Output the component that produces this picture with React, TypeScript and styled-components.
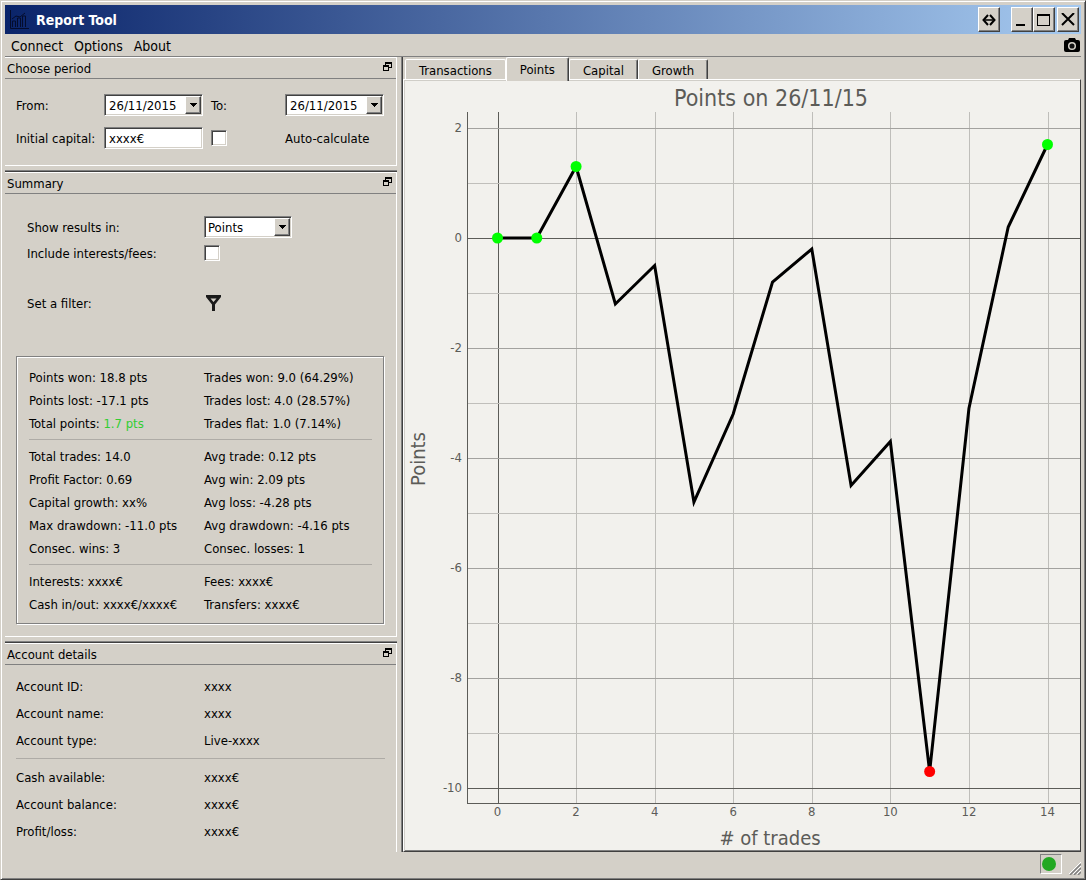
import React from "react";
import styled, { createGlobalStyle, css } from "styled-components";

const face = "#d4d0c8";
const shade = "#808080";
const dark = "#404040";
const chartBg = "#f2f1ed";
const chartInk = "#5c5c58";
const fontStack = '"DejaVu Sans Condensed", "DejaVu Sans", "Noto Sans", sans-serif';

const GlobalStyle = createGlobalStyle`
  *, *::before, *::after { box-sizing: border-box; }
  body { margin: 0; background: ${face}; }
  body, button, input, select { font-family: ${fontStack}; font-size: 13px; color: #000; }
`;

const raised = css`
  border: 1px solid;
  border-color: #fff ${dark} ${dark} #fff;
  box-shadow: inset -1px -1px ${shade};
`;

const sunken = css`
  border: 1px solid;
  border-color: ${shade} #fff #fff ${shade};
  box-shadow: inset 1px 1px ${dark}, inset -1px -1px ${face};
`;

const Window = styled.div`
  display: flex;
  flex-direction: column;
  min-height: 100vh;
  padding: 4px 3px 0 4px;
  background: ${face};
  border: 1px solid;
  border-color: ${face} ${dark} ${dark} ${face};
  box-shadow: inset 1px 1px #fff, inset -1px -1px ${shade};
`;

const TitleBar = styled.header`
  display: flex;
  align-items: center;
  height: 29px;
  margin-right: 1px;
  padding: 0 2px 0 4px;
  background: linear-gradient(to right, #0a246a, #a6caf0);
`;

const Title = styled.h1`
  flex: 1;
  margin: 0 0 0 7px;
  font-size: 14px;
  line-height: 20px;
  color: #fff;
`;

const WindowButton = styled.button<{ $gap?: number }>`
  display: grid;
  place-items: center;
  width: 22px;
  height: 25px;
  padding: 0;
  margin-left: ${(p) => p.$gap ?? 0}px;
  background: ${face};
  ${raised}
`;

const MenuBar = styled.nav`
  display: flex;
  align-items: center;
  gap: 11px;
  height: 23px;
  margin-right: 1px;
  padding: 0 1px 0 6px;
  border-bottom: 1px solid ${shade};
`;

const MenuItem = styled.button`
  padding: 2px 0 0;
  border: 0;
  background: none;
  font-size: 14px;
  line-height: 20px;
`;

const IconButton = styled.button<{ $end?: boolean }>`
  display: block;
  justify-self: start;
  padding: 0;
  border: 0;
  background: none;
  line-height: 0;
  margin-left: ${(p) => (p.$end ? "auto" : "0")};
`;

const Main = styled.main`
  flex: 1;
  display: grid;
  grid-template-columns: 392px minmax(0, 1fr);
  column-gap: 4px;
  margin-right: 1px;
`;

const Docks = styled.div`
  display: flex;
  flex-direction: column;
`;

const DockBox = styled.section<{ $split?: boolean; $fill?: boolean }>`
  border-right: 1px solid #fff;
  border-top: 1px solid #fff;
  ${(p) =>
    p.$split &&
    css`
      &::before {
        content: "";
        display: block;
        height: 2px;
        margin: -3px -1px 1px 0;
        background: linear-gradient(${shade} 50%, ${dark} 50%);
      }
    `}
  ${(p) =>
    p.$fill
      ? "flex: 1;"
      : css`
          border-bottom: 1px solid #fff;
          margin-bottom: 6px;
        `}
`;

const DockHeader = styled.div`
  display: flex;
  align-items: flex-start;
  justify-content: space-between;
  height: 21px;
  padding: 4px 4px 0 2px;
  border-bottom: 1px solid ${shade};
`;

const DockTitle = styled.h2`
  margin: 0;
  font-size: 13px;
  font-weight: normal;
  line-height: 13px;
`;

const PeriodForm = styled.form`
  display: grid;
  grid-template-columns: 88px 107px 74px 99px;
  grid-auto-rows: 22px;
  row-gap: 11px;
  align-items: center;
  padding: 15px 0 16px 11px;
`;

const Field = styled.div`
  display: flex;
  width: 99px;
  height: 22px;
  padding: 1px;
  background: #fff;
  ${sunken}
`;

const TextInput = styled.input`
  flex: 1;
  min-width: 0;
  width: 100%;
  padding: 0 0 0 3px;
  border: 0;
  background: transparent;
  outline: none;
`;

const DropButton = styled.button`
  display: grid;
  place-items: center;
  width: 16px;
  padding: 0;
  background: ${face};
  ${raised}
`;

const SelectField = styled(Field)`
  position: relative;
  width: 88px;
`;

const Select = styled.select`
  flex: 1;
  padding: 0 18px 0 2px;
  border: 0;
  background: transparent;
  appearance: none;
  outline: none;
`;

const SelectArrow = styled.span`
  position: absolute;
  top: 1px;
  right: 1px;
  bottom: 1px;
  display: grid;
  place-items: center;
  width: 16px;
  background: ${face};
  pointer-events: none;
  ${raised}
`;

const CheckBox = styled.input`
  appearance: none;
  width: 16px;
  height: 16px;
  margin: 0;
  background: #fff;
  ${sunken}
`;

const SummaryForm = styled.div`
  display: grid;
  grid-template-columns: 177px 1fr;
  grid-auto-rows: 22px;
  row-gap: 4px;
  align-items: center;
  padding: 22px 0 0 22px;
`;

const FilterRow = styled.div`
  display: grid;
  grid-template-columns: 177px 1fr;
  align-items: center;
  height: 22px;
  margin: 28px 0 0 22px;
`;

const StatsFrame = styled.div`
  margin: 42px 12px 12px 11px;
  padding: 9px 11px 7px 12px;
  border: 1px solid ${shade};
  box-shadow: 1px 1px #fff, inset 1px 1px #fff;
`;

const StatRow = styled.div`
  display: grid;
  grid-template-columns: 175px 1fr;
  line-height: 23px;
  white-space: nowrap;
`;

const Gain = styled.span`
  color: #32cd32;
`;

const Rule = styled.hr`
  height: 1px;
  margin: 4px 0 5px;
  border: 0;
  background: #aeaba6;
`;

const AccountBody = styled.div`
  padding: 8px 11px 7px 11px;
`;

const AccountRow = styled.div`
  display: grid;
  grid-template-columns: 188px 1fr;
  line-height: 27px;
`;

const Charts = styled.div`
  display: flex;
  flex-direction: column;
  border-left: 1px solid ${shade};
  box-shadow: inset 1px 0 ${dark};
  padding-left: 1px;
`;

const TabList = styled.div`
  display: flex;
  align-items: flex-end;
  height: 22px;
  padding-left: 2px;
`;

const Tab = styled.button<{ $active?: boolean; $joined?: boolean }>`
  position: relative;
  height: ${(p) => (p.$active ? 24 : 20)}px;
  margin-bottom: ${(p) => (p.$active ? -2 : 0)}px;
  z-index: ${(p) => (p.$active ? 1 : 0)};
  padding: ${(p) => (p.$active ? "0 13px" : "2px 13px 0")};
  border: 1px solid #fff;
  border-bottom: 0;
  border-right-color: ${(p) => (p.$joined ? "#fff" : dark)};
  border-radius: 2px 2px 0 0;
  box-shadow: ${(p) => (p.$joined ? "none" : `inset -1px 0 ${shade}`)};
  background: ${face};
  line-height: 18px;
`;

const Pane = styled.div`
  flex: 1;
  display: flex;
  border: 1px solid;
  border-color: #fff ${dark} ${dark} #fff;
  box-shadow: inset 1px 1px #d0cec8, inset 0 -1px ${shade};
  padding: 1px 0 1px 1px;
  background: ${chartBg};
`;

const ChartSvg = styled.svg`
  display: block;
  flex: 1;
  min-width: 0;
  font-family: ${fontStack};
  fill: ${chartInk};
`;

const TickText = styled.text`
  font-size: 13px;
`;

const ChartText = styled.text`
  font-size: 20px;
  text-anchor: middle;
`;

const ChartTitle = styled.text`
  font-size: 23px;
  text-anchor: middle;
`;

const StatusBar = styled.footer`
  display: flex;
  justify-content: flex-end;
  align-items: flex-start;
  gap: 7px;
  height: 27px;
  padding: 2px 1px 0 0;
`;

const Indicator = styled.div`
  padding: 2px 6px 2px 1px;
  width: 22px;
  height: 20px;
  border: 1px solid;
  border-color: ${shade} #fff #fff ${shade};
  &::before {
    content: "";
    display: block;
    width: 14px;
    height: 14px;
    border-radius: 50%;
    background: #22a822;
  }
`;

const Grip = styled.svg`
  margin-top: 8px;
`;

const Arrow = () => (
  <svg width="7" height="4" viewBox="0 0 7 4" shapeRendering="crispEdges">
    <path d="M0 0h7v1H6v1H5v1H4v1H3V3H2V2H1V1H0z" />
  </svg>
);

function Dock(props: { title: string; split?: boolean; fill?: boolean; children: React.ReactNode }) {
  return (
    <DockBox $split={props.split} $fill={props.fill}>
      <DockHeader>
        <DockTitle>{props.title}</DockTitle>
        <IconButton type="button" aria-label={`Float ${props.title}`}>
          <svg width="9" height="9" viewBox="0 0 9 9" shapeRendering="crispEdges">
            <path d="M2 0h7v6H6V5h2V2H3v1H2z M0 3h6v6H0z M1 5v3h4V5z" fillRule="evenodd" />
          </svg>
        </IconButton>
      </DockHeader>
      {props.children}
    </DockBox>
  );
}

function DateField({ id }: { id: string }) {
  return (
    <Field>
      <TextInput id={id} defaultValue="26/11/2015" />
      <DropButton type="button" aria-label="Open calendar">
        <Arrow />
      </DropButton>
    </Field>
  );
}

const groups: React.ReactNode[][][] = [
  [
    ["Points won: 18.8 pts", "Trades won: 9.0 (64.29%)"],
    ["Points lost: -17.1 pts", "Trades lost: 4.0 (28.57%)"],
    [<>Total points: <Gain>1.7 pts</Gain></>, "Trades flat: 1.0 (7.14%)"],
  ],
  [
    ["Total trades: 14.0", "Avg trade: 0.12 pts"],
    ["Profit Factor: 0.69", "Avg win: 2.09 pts"],
    ["Capital growth: xx%", "Avg loss: -4.28 pts"],
    ["Max drawdown: -11.0 pts", "Avg drawdown: -4.16 pts"],
    ["Consec. wins: 3", "Consec. losses: 1"],
  ],
  [
    ["Interests: xxxx€", "Fees: xxxx€"],
    ["Cash in/out: xxxx€/xxxx€", "Transfers: xxxx€"],
  ],
];

const account = [
  [["Account ID:", "xxxx"], ["Account name:", "xxxx"], ["Account type:", "Live-xxxx"]],
  [["Cash available:", "xxxx€"], ["Account balance:", "xxxx€"], ["Profit/loss:", "xxxx€"]],
];

const points = [0, 0, 1.3, -1.2, -0.5, -4.8, -3.2, -0.8, -0.2, -4.5, -3.7, -9.7, -3.1, 0.2, 1.7];
const markers = [
  { i: 0, color: "#00ff00" },
  { i: 1, color: "#00ff00" },
  { i: 2, color: "#00ff00" },
  { i: 14, color: "#00ff00" },
  { i: 11, color: "#ff0000" },
];
const plot = { left: 62, right: 675, top: 31, bottom: 722 };
const px = (i: number) => 92.5 + (i * 550) / 14;
const py = (v: number) => 157 - v * 55;

function PointsChart() {
  const rows = Array.from({ length: 12 }, (_, k) => 2 - k).concat(-10);
  const cols = [0, 2, 4, 6, 8, 10, 12, 14];
  return (
    <ChartSvg viewBox="0 0 675 769" role="img" aria-label="Points on 26/11/15">
      <ChartTitle x="366" y="25">Points on 26/11/15</ChartTitle>
      <g shapeRendering="crispEdges">
        {cols.map((c) => (
          <rect key={c} x={Math.round(px(c))} y={plot.top} width="1" height={plot.bottom - plot.top} fill={c === 0 ? chartInk : "#bfbeba"} />
        ))}
        {rows.map((r) => (
          <rect
            key={r}
            x={plot.left}
            y={py(r)}
            width={plot.right - plot.left}
            height="1"
            fill={r === 0 || r === -10 ? chartInk : r % 2 ? "#c0bfbb" : "#a3a29f"}
          />
        ))}
        <rect x={plot.left} y={plot.top} width="1" height={plot.bottom - plot.top + 1} />
        <rect x={plot.left} y={plot.bottom} width={plot.right - plot.left} height="1" />
      </g>
      {[2, 0, -2, -4, -6, -8, -10].map((v) => (
        <TickText key={v} x="57" y={py(v) + 4} textAnchor="end">{v}</TickText>
      ))}
      {cols.map((c) => (
        <TickText key={c} x={px(c)} y="735" textAnchor="middle">{c}</TickText>
      ))}
      <ChartText x="365" y="764"># of trades</ChartText>
      <ChartText transform="translate(20 378) rotate(-90)">Points</ChartText>
      <polyline
        points={points.map((v, i) => `${px(i)},${py(v)}`).join(" ")}
        fill="none"
        stroke="#000"
        strokeWidth="3"
      />
      {markers.map((m) => (
        <circle key={m.i} cx={px(m.i)} cy={py(points[m.i])} r="5.5" fill={m.color} />
      ))}
    </ChartSvg>
  );
}

export default function App() {
  return (
    <Window>
      <GlobalStyle />
      <TitleBar>
        <svg width="20" height="20" viewBox="0 0 20 20" fill="none" stroke="#040c2c">
          <path d="M1.5 0v18.5H20M3.5 17v-6h3v6M8.5 17V8h3v9M13.5 17V6h3v11M3 9l4-3 4 1 5-4" />
        </svg>
        <Title>Report Tool</Title>
        <WindowButton aria-label="Resize">
          <svg width="14" height="12" viewBox="0 0 14 12" fill="none" stroke="#000" strokeWidth="2">
            <path d="M6 1L1.500 6 6 11M8 1l4.500 5L8 11" />
            <path d="M3 6h8" strokeWidth="1.500" />
          </svg>
        </WindowButton>
        <WindowButton $gap={11} aria-label="Minimize">
          <svg width="14" height="14" viewBox="0 0 14 14"><path d="M1 11h9v2H1z" /></svg>
        </WindowButton>
        <WindowButton aria-label="Maximize">
          <svg width="14" height="14" viewBox="0 0 14 14" shapeRendering="crispEdges">
            <path d="M0 1h13v12H0z M1 3v9h11V3z" fillRule="evenodd" />
          </svg>
        </WindowButton>
        <WindowButton $gap={2} aria-label="Close">
          <svg width="14" height="14" viewBox="0 0 14 14" stroke="#000" strokeWidth="2">
            <path d="M1 0l12 12M13 0L1 12" />
          </svg>
        </WindowButton>
      </TitleBar>
      <MenuBar>
        <MenuItem>Connect</MenuItem>
        <MenuItem>Options</MenuItem>
        <MenuItem>About</MenuItem>
        <IconButton $end aria-label="Take screenshot">
          <svg width="16" height="14" viewBox="0 0 16 14">
            <path d="M2 2h2l1-2h6l1 2h2a2 2 0 0 1 2 2v8a2 2 0 0 1-2 2H2a2 2 0 0 1-2-2V4a2 2 0 0 1 2-2z" />
            <circle cx="8" cy="8" r="3.3" fill="#111" stroke="#d4d0c8" strokeWidth="1.500" />
          </svg>
        </IconButton>
      </MenuBar>
      <Main>
        <Docks>
          <Dock title="Choose period">
            <PeriodForm>
              <label htmlFor="from">From:</label>
              <DateField id="from" />
              <label htmlFor="to">To:</label>
              <DateField id="to" />
              <label htmlFor="capital">Initial capital:</label>
              <Field>
                <TextInput id="capital" defaultValue="xxxx€" />
              </Field>
              <CheckBox type="checkbox" id="auto" />
              <label htmlFor="auto">Auto-calculate</label>
            </PeriodForm>
          </Dock>
          <Dock title="Summary" split>
            <SummaryForm>
              <label htmlFor="unit">Show results in:</label>
              <SelectField>
                <Select id="unit" defaultValue="Points">
                  <option>Points</option>
                </Select>
                <SelectArrow>
                  <Arrow />
                </SelectArrow>
              </SelectField>
              <label htmlFor="fees">Include interests/fees:</label>
              <CheckBox type="checkbox" id="fees" />
            </SummaryForm>
            <FilterRow>
              <label htmlFor="filter">Set a filter:</label>
              <IconButton type="button" id="filter">
                <svg width="18" height="16" viewBox="0 0 18 16">
                  <path d="M2 0h15v2L11 9.500V16H8V9.500L2 2z M6.500 3.500l3 3.500 3-3.500z" fill="#1a1a1a" fillRule="evenodd" />
                </svg>
              </IconButton>
            </FilterRow>
            <StatsFrame>
              {groups.map((rows, g) => (
                <React.Fragment key={g}>
                  {g > 0 && <Rule />}
                  {rows.map(([a, b], r) => (
                    <StatRow key={r}>
                      <span>{a}</span>
                      <span>{b}</span>
                    </StatRow>
                  ))}
                </React.Fragment>
              ))}
            </StatsFrame>
          </Dock>
          <Dock title="Account details" split fill>
            <AccountBody>
              {account.map((rows, g) => (
                <React.Fragment key={g}>
                  {g > 0 && <Rule />}
                  {rows.map(([a, b]) => (
                    <AccountRow key={a}>
                      <span>{a}</span>
                      <span>{b}</span>
                    </AccountRow>
                  ))}
                </React.Fragment>
              ))}
            </AccountBody>
          </Dock>
        </Docks>
        <Charts>
          <TabList role="tablist">
            <Tab role="tab" $joined>Transactions</Tab>
            <Tab role="tab" aria-selected $active>Points</Tab>
            <Tab role="tab">Capital</Tab>
            <Tab role="tab">Growth</Tab>
          </TabList>
          <Pane>
            <PointsChart />
          </Pane>
        </Charts>
      </Main>
      <StatusBar>
        <Indicator />
        <Grip width="12" height="13" viewBox="0 0 12 13" fill="none">
          <path d="M0 12L12 0M4 12l8-8M8 12l4-4" stroke="#fff" />
          <path d="M1 13L12 2M5 13l7-7M9 13l3-3" stroke={shade} strokeWidth="1.500" />
        </Grip>
      </StatusBar>
    </Window>
  );
}
